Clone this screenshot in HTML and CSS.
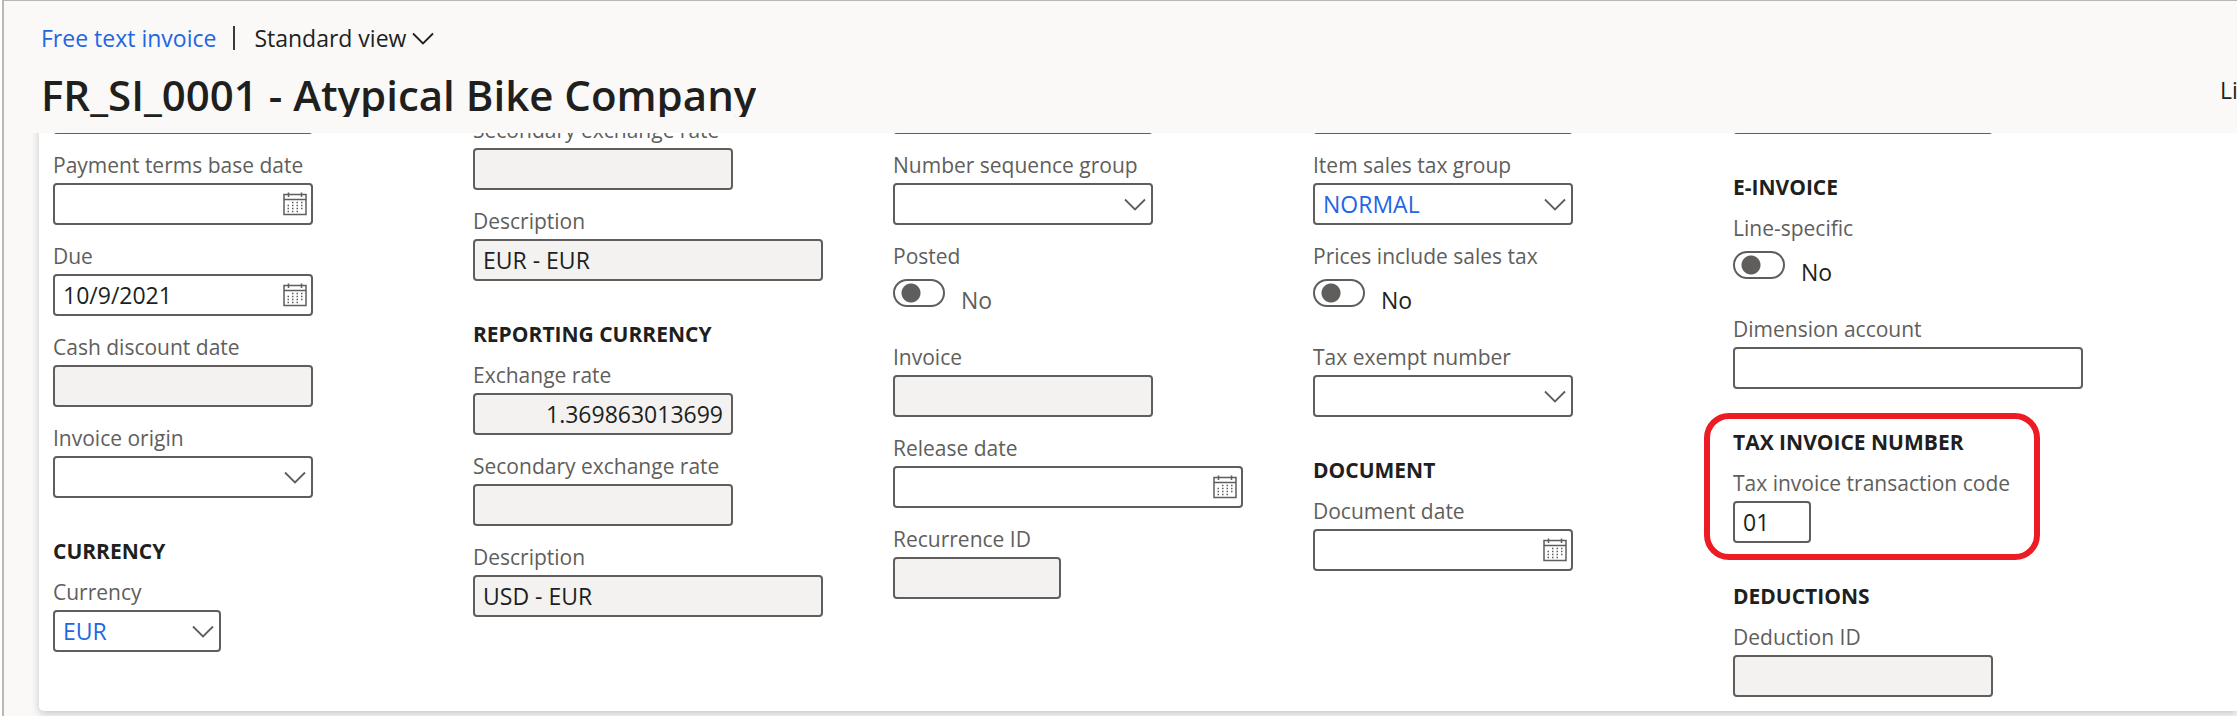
FILE: index.html
```html
<!DOCTYPE html>
<html lang="en">
<head>
<meta charset="utf-8">
<title>FR_SI_0001 - Atypical Bike Company</title>
<link rel="stylesheet" href="styles.css">
</head>
<body>
<svg class="sprite" aria-hidden="true">
  <symbol id="chevron" viewBox="0 0 22 13"><path d="M1 1.5 L11 11.5 L21 1.5" fill="none" stroke="currentColor" stroke-width="1.8"/></symbol>
  <symbol id="calendar" viewBox="0 0 24 24">
    <path d="M1 2.5H23V22.5H1ZM1 7.5H23M5.5 0.5V5M18.5 0.5V5" fill="none" stroke="currentColor" stroke-width="1.5"/>
    <path d="M9 10.5h1.500M13.5 10.5h1.500M18 10.5h1.500M4.500 13.500h1.500M9 13.5h1.500M13.5 13.5h1.500M18 13.5h1.500M4.500 16.500h1.500M9 16.5h1.500M13.5 16.5h1.500M18 16.5h1.500M4.500 19.500h1.500M9 19.5h1.500M13.5 19.5h1.500" fill="none" stroke="currentColor" stroke-width="1.5"/>
  </symbol>
</svg>
<div class="page">
  <header class="header">
    <div class="header-main">
      <nav class="crumbs">
        <a class="crumb-link" href="#">Free text invoice</a>
        <span class="crumb-divider"></span>
        <button class="view-button" type="button">Standard view <svg class="chevron"><use href="#chevron"/></svg></button>
      </nav>
      <h1 class="title">FR_SI_0001 - Atypical Bike Company</h1>
    </div>
    <a class="lines-tab" href="#">Lines</a>
  </header>
  <main class="viewport">
    <form class="card">
      <div class="column">
        <div class="field"><input class="box box-link" type="text" aria-label="Terms of payment"></div>
        <div class="field"><label class="label" for="base-date">Payment terms base date</label>
          <div class="control"><input class="box" id="base-date" type="text"><button class="icon-button" type="button" aria-label="Open calendar"><svg class="calendar"><use href="#calendar"/></svg></button></div></div>
        <div class="field"><label class="label" for="due">Due</label>
          <div class="control"><input class="box" id="due" type="text" value="10/9/2021"><button class="icon-button" type="button" aria-label="Open calendar"><svg class="calendar"><use href="#calendar"/></svg></button></div></div>
        <div class="field"><label class="label" for="cash">Cash discount date</label><input class="box" id="cash" type="text" readonly></div>
        <div class="field"><label class="label" for="origin">Invoice origin</label>
          <div class="control"><select class="box" id="origin"><option></option></select><svg class="chevron"><use href="#chevron"/></svg></div></div>
        <h2 class="heading">Currency</h2>
        <div class="field"><label class="label" for="currency">Currency</label>
          <div class="control control-short"><select class="box value-link" id="currency"><option>EUR</option></select><svg class="chevron"><use href="#chevron"/></svg></div></div>
      </div>
      <div class="column column-scrolled">
        <div class="field"><label class="label" for="sec1">Secondary exchange rate</label><input class="box" id="sec1" type="text" readonly></div>
        <div class="field"><label class="label" for="desc1">Description</label><input class="box box-wide" id="desc1" type="text" value="EUR - EUR" readonly></div>
        <h2 class="heading">Reporting currency</h2>
        <div class="field"><label class="label" for="rate">Exchange rate</label><input class="box box-right" id="rate" type="text" value="1.369863013699" readonly></div>
        <div class="field"><label class="label" for="sec2">Secondary exchange rate</label><input class="box" id="sec2" type="text" readonly></div>
        <div class="field"><label class="label" for="desc2">Description</label><input class="box box-wide" id="desc2" type="text" value="USD - EUR" readonly></div>
      </div>
      <div class="column">
        <div class="field"><input class="box" type="text" aria-label="Posting profile"></div>
        <div class="field"><label class="label" for="sequence">Number sequence group</label>
          <div class="control"><select class="box" id="sequence"><option></option></select><svg class="chevron"><use href="#chevron"/></svg></div></div>
        <div class="field"><label class="label" for="posted">Posted</label>
          <div class="switch"><input class="toggle" id="posted" type="checkbox" role="switch"><span class="status status-muted">No</span></div></div>
        <div class="field"><label class="label" for="invoice">Invoice</label><input class="box" id="invoice" type="text" readonly></div>
        <div class="field"><label class="label" for="release">Release date</label>
          <div class="control control-wide"><input class="box" id="release" type="text"><button class="icon-button" type="button" aria-label="Open calendar"><svg class="calendar"><use href="#calendar"/></svg></button></div></div>
        <div class="field"><label class="label" for="recurrence">Recurrence ID</label><input class="box box-short" id="recurrence" type="text" readonly></div>
      </div>
      <div class="column">
        <div class="field"><input class="box" type="text" aria-label="Sales tax group"></div>
        <div class="field"><label class="label" for="item-tax">Item sales tax group</label>
          <div class="control"><select class="box value-link" id="item-tax"><option>NORMAL</option></select><svg class="chevron"><use href="#chevron"/></svg></div></div>
        <div class="field"><label class="label" for="prices">Prices include sales tax</label>
          <div class="switch"><input class="toggle" id="prices" type="checkbox" role="switch"><span class="status">No</span></div></div>
        <div class="field"><label class="label" for="exempt">Tax exempt number</label>
          <div class="control"><select class="box" id="exempt"><option></option></select><svg class="chevron"><use href="#chevron"/></svg></div></div>
        <h2 class="heading">Document</h2>
        <div class="field"><label class="label" for="doc-date">Document date</label>
          <div class="control"><input class="box" id="doc-date" type="text"><button class="icon-button" type="button" aria-label="Open calendar"><svg class="calendar"><use href="#calendar"/></svg></button></div></div>
      </div>
      <div class="column">
        <div class="field"><input class="box" type="text" aria-label="List code"></div>
        <h2 class="heading">E-invoice</h2>
        <div class="field"><label class="label" for="line-specific">Line-specific</label>
          <div class="switch"><input class="toggle" id="line-specific" type="checkbox" role="switch"><span class="status">No</span></div></div>
        <div class="field"><label class="label" for="dimension">Dimension account</label><input class="box box-wide" id="dimension" type="text"></div>
        <section class="group">
          <h2 class="heading">Tax invoice number</h2>
          <div class="field"><label class="label" for="tax-code">Tax invoice transaction code</label><input class="box box-code" id="tax-code" type="text" value="01"></div>
          <div class="highlight"></div>
        </section>
        <h2 class="heading">Deductions</h2>
        <div class="field"><label class="label" for="deduction">Deduction ID</label><input class="box" id="deduction" type="text" readonly></div>
      </div>
    </form>
  </main>
</div>
</body>
</html>
```
FILE: styles.css
```css
* { box-sizing: border-box; }

body {
  margin: 0;
  background: #fff;
  color: #201f1e;
  font-family: "Open Sans", "Noto Sans", sans-serif;
  font-size: 23px;
}

button, input, select { font: inherit; color: inherit; margin: 0; }

.sprite { position: absolute; width: 0; height: 0; }

.page {
  display: flex;
  flex-direction: column;
  height: 100vh;
  margin-left: 2px;
  overflow: hidden;
  background: #faf9f8;
  border-top: 1px solid #b8b6b4;
  border-left: 2px solid #bab8b6;
}

.header {
  display: flex;
  flex: none;
  justify-content: space-between;
  height: 132px;
  padding: 21px 0 0 37px;
  overflow: hidden;
}

.crumbs {
  display: flex;
  align-items: center;
  height: 32px;
}

.crumb-link { color: #2266e3; text-decoration: none; }

.crumb-divider {
  width: 2px;
  height: 24px;
  margin: 0 19px 0 17px;
  background: #3b3a39;
}

.view-button {
  display: flex;
  align-items: center;
  gap: 6px;
  padding: 0;
  border: 0;
  background: none;
}

.title {
  height: 53px;
  margin: 10px 0 0;
  overflow: hidden;
  font-size: 42px;
  font-weight: 600;
  line-height: 62px;
}

.lines-tab {
  width: 17px;
  margin-top: 52px;
  overflow: hidden;
  color: #201f1e;
  line-height: 32px;
  text-decoration: none;
}

.viewport {
  flex: 1;
  min-height: 0;
  padding-left: 35px;
  overflow: hidden;
}

.card {
  display: grid;
  grid-template-columns: repeat(5, 420px);
  margin-top: -41px;
  padding: 0 0 14px 14px;
  border-radius: 0 0 0 5px;
  background: #fff;
  box-shadow: 0 3px 8px rgba(0, 0, 0, 0.2);
}

.column-scrolled { padding-top: 24px; }

.field { padding-bottom: 17px; }

.column > .field:last-child { padding-bottom: 0; }

.label {
  display: block;
  width: max-content;
  margin-bottom: 4px;
  color: #605e5c;
  font-size: 21px;
  font-weight: 500;
  line-height: 28px;
}

.heading {
  margin: 22px 0 13px;
  font-size: 21px;
  font-weight: 700;
  line-height: 28px;
  text-transform: uppercase;
}

.box {
  display: block;
  width: 260px;
  height: 42px;
  padding: 0 8px;
  border: 2px solid #605e5c;
  border-radius: 4px;
  outline: 0;
  appearance: none;
  background: #fff;
  color: #201f1e;
}

.box:read-only:is(input) { background: #f3f2f1; }

.box-right { text-align: right; }
.box-link { border-color: #2266e3; }
.value-link { color: #2266e3; }
.box-wide { width: 350px; }
.box-short { width: 168px; }
.box-code { width: 78px; }

.control {
  display: grid;
  width: 260px;
  align-items: center;
  color: #605e5c;
}

.control > * { grid-area: 1 / 1; }
.control > .box { width: 100%; }
.control > .chevron { justify-self: end; margin-right: 7px; pointer-events: none; }
.control-short { width: 168px; }
.control-wide { width: 350px; }

.chevron { width: 22px; height: 13px; }

.icon-button {
  display: flex;
  justify-self: end;
  margin-right: 6px;
  padding: 0;
  border: 0;
  background: none;
}

.calendar { width: 24px; height: 24px; }

.switch {
  display: flex;
  gap: 16px;
  height: 52px;
  padding-top: 5px;
}

.toggle {
  width: 52px;
  height: 28px;
  margin: 0;
  border: 2px solid #605e5c;
  border-radius: 14px;
  appearance: none;
  background: radial-gradient(circle at 16px 12px, #605e5c 9px, transparent 10px);
}

.status {
  padding-top: 5px;
  line-height: 32px;
}

.status-muted { color: #605e5c; }

.group { position: relative; display: flow-root; }

/* Callout ring drawn around the tax invoice fields */
.highlight {
  position: absolute;
  top: 7px;
  bottom: 0;
  left: -29px;
  width: 336px;
  border: 6px solid #ed1c24;
  border-radius: 25px;
  pointer-events: none;
}
```
